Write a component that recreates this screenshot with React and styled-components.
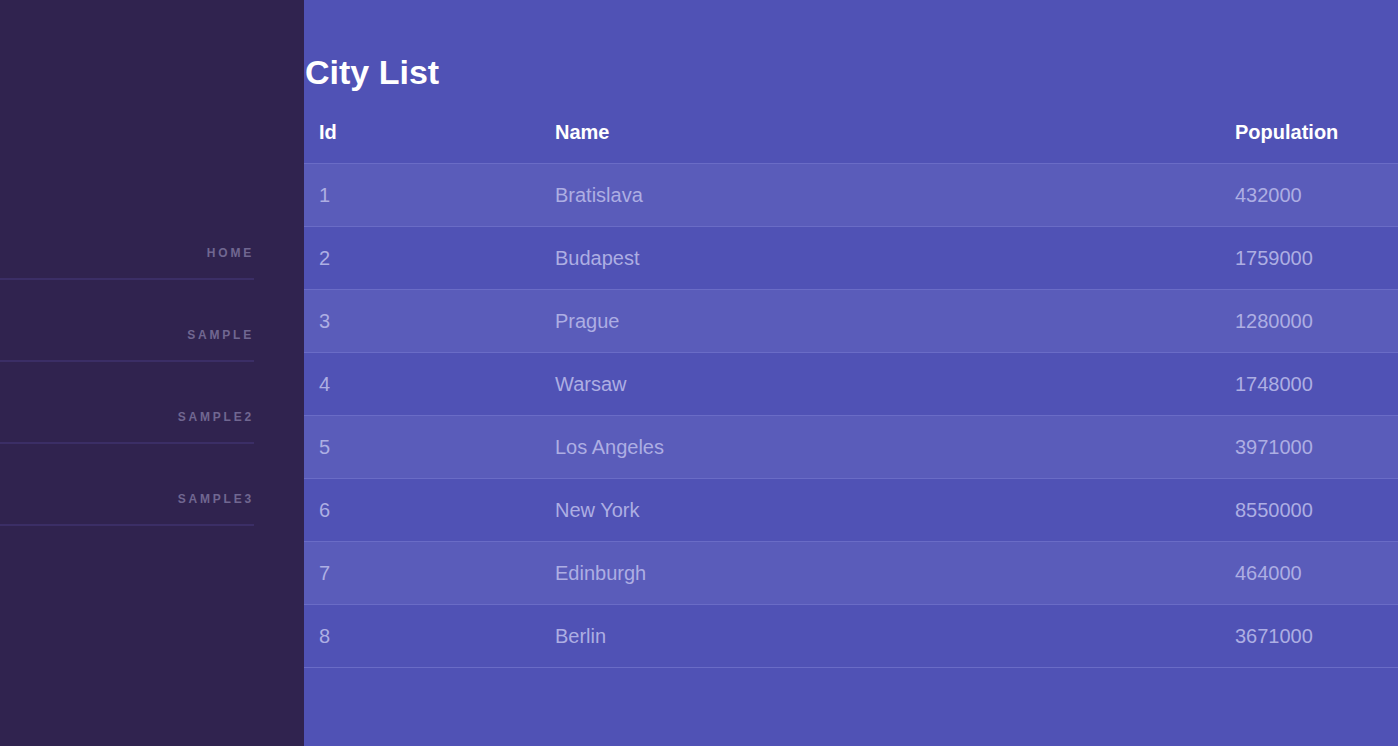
import React from "react";
import styled, { createGlobalStyle } from "styled-components";

const GlobalStyle = createGlobalStyle`
  html, body {
    margin: 0;
    padding: 0;
    height: 100%;
  }
  body {
    font-family: "Liberation Sans", Arial, sans-serif;
    background: #5052b5;
  }
  #root {
    height: 100%;
  }
`;

const Layout = styled.div`
  display: flex;
  min-height: 746px;
  height: 100vh;
`;

const Sidebar = styled.aside`
  width: 304px;
  flex-shrink: 0;
  background: #30234f;
  padding-top: 198px;
  box-sizing: border-box;
`;

const Nav = styled.nav`
  width: 254px;
  display: flex;
  flex-direction: column;
`;

const NavItem = styled.a`
  display: block;
  height: 82px;
  box-sizing: border-box;
  padding-top: 48px;
  text-align: right;
  font-size: 12px;
  line-height: 14px;
  font-weight: bold;
  letter-spacing: 2.8px;
  color: #706791;
  text-decoration: none;
  text-transform: uppercase;
  border-bottom: 2px solid #3b2e66;
`;

const Main = styled.main`
  flex: 1;
  background: #5052b5;
  padding-top: 53px;
`;

const Title = styled.h1`
  margin: 0 0 9px 1px;
  font-size: 34px;
  line-height: 39px;
  font-weight: bold;
  color: #ffffff;
`;

const Table = styled.table`
  width: 100%;
  border-collapse: collapse;
  table-layout: fixed;
`;

const HeadCell = styled.th`
  text-align: left;
  width: ${(p) => p.$width || "auto"};
  padding: 20px 15px 19px;
  font-size: 20px;
  line-height: 23px;
  font-weight: bold;
  color: #ffffff;
  border-bottom: 1px solid #6a6cc6;
`;

const Row = styled.tr`
  background: ${(p) => (p.$odd ? "#5a5cba" : "transparent")};
  border-bottom: 1px solid #6a6cc6;
`;

const Cell = styled.td`
  padding: 20px 15px 19px;
  font-size: 20px;
  line-height: 23px;
  color: #adaee3;
`;

const cities = [
  [1, "Bratislava", 432000],
  [2, "Budapest", 1759000],
  [3, "Prague", 1280000],
  [4, "Warsaw", 1748000],
  [5, "Los Angeles", 3971000],
  [6, "New York", 8550000],
  [7, "Edinburgh", 464000],
  [8, "Berlin", 3671000],
];

const links = ["Home", "Sample", "Sample2", "Sample3"];

export default function App() {
  return (
    <>
      <GlobalStyle />
      <Layout>
        <Sidebar>
          <Nav>
            {links.map((l) => (
              <NavItem key={l} href="#">
                {l}
              </NavItem>
            ))}
          </Nav>
        </Sidebar>
        <Main>
          <Title>City List</Title>
          <Table>
            <thead>
              <tr>
                <HeadCell $width="206px">Id</HeadCell>
                <HeadCell>Name</HeadCell>
                <HeadCell $width="148px">Population</HeadCell>
              </tr>
            </thead>
            <tbody>
              {cities.map(([id, name, pop], i) => (
                <Row key={id} $odd={i % 2 === 0}>
                  <Cell>{id}</Cell>
                  <Cell>{name}</Cell>
                  <Cell>{pop}</Cell>
                </Row>
              ))}
            </tbody>
          </Table>
        </Main>
      </Layout>
    </>
  );
}
